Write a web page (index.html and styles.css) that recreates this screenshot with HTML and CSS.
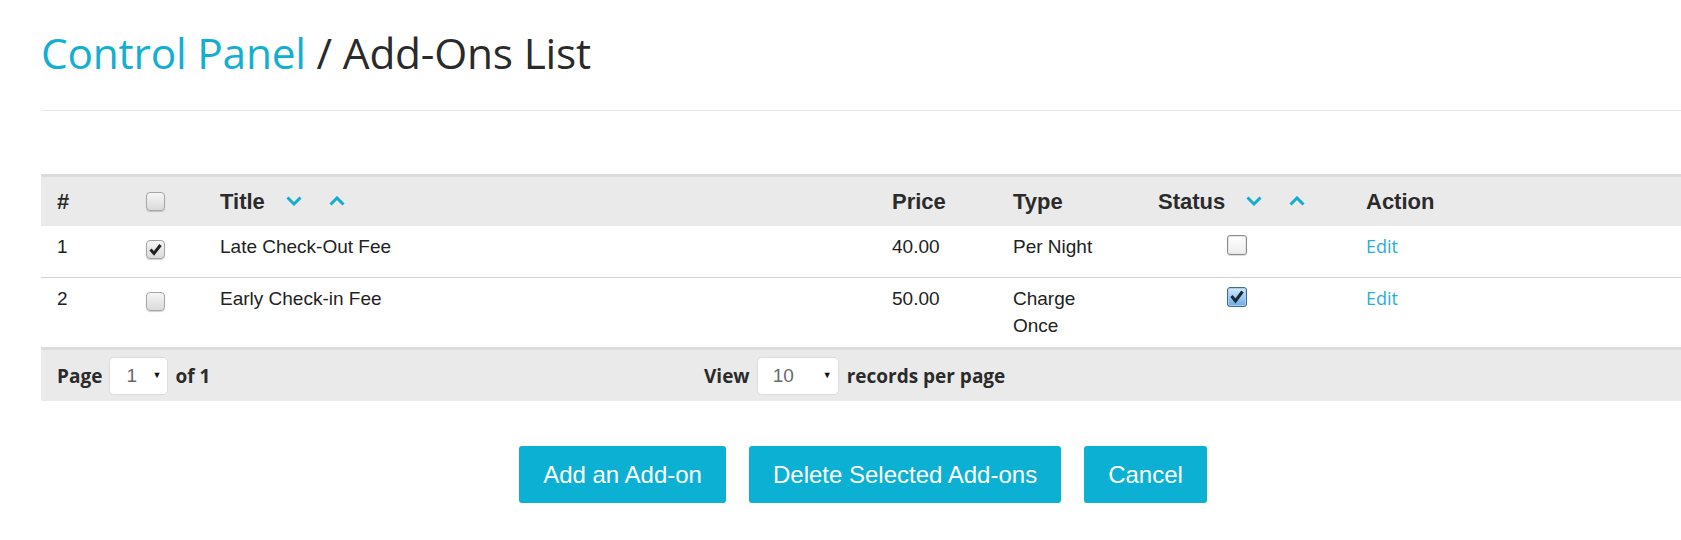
FILE: index.html
```html
<!DOCTYPE html>
<html>
<head>
<meta charset="utf-8">
<title>Add-Ons List</title>
<link rel="stylesheet" href="styles.css">
</head>
<body>
<div class="page">
  <h1 class="heading"><a class="crumb" href="#">Control Panel</a> / Add-Ons List</h1>
  <hr class="rule">

  <table class="grid">
    <colgroup>
      <col class="c-num"><col class="c-cb"><col class="c-title"><col class="c-price"><col class="c-type"><col class="c-status"><col class="c-action">
    </colgroup>
    <thead>
      <tr>
        <th>#</th>
        <th><span class="cb"></span></th>
        <th>Title <span class="sorts"><svg class="chev" viewBox="0 0 16 10"><polyline points="1.5,1.5 8,8 14.5,1.5"/></svg><svg class="chev" viewBox="0 0 16 10"><polyline points="1.5,8.5 8,2 14.5,8.5"/></svg></span></th>
        <th>Price</th>
        <th>Type</th>
        <th>Status <span class="sorts"><svg class="chev" viewBox="0 0 16 10"><polyline points="1.5,1.5 8,8 14.5,1.5"/></svg><svg class="chev" viewBox="0 0 16 10"><polyline points="1.5,8.5 8,2 14.5,8.5"/></svg></span></th>
        <th>Action</th>
      </tr>
    </thead>
    <tbody>
      <tr class="r1">
        <td>1</td>
        <td><span class="cb"><svg viewBox="0 0 19 19"><path d="M4.5 9.5 L8 13.5 L14.5 5" /></svg></span></td>
        <td>Late Check-Out Fee</td>
        <td>40.00</td>
        <td>Per Night</td>
        <td class="st"><span class="scb"></span></td>
        <td><a class="edit" href="#">Edit</a></td>
      </tr>
      <tr class="r2">
        <td>2</td>
        <td><span class="cb"></span></td>
        <td>Early Check-in Fee</td>
        <td>50.00</td>
        <td>Charge<br>Once</td>
        <td class="st"><span class="scb on"><svg viewBox="0 0 20 20"><path d="M4.5 9 L8.5 14 L15.5 4.5" /></svg></span></td>
        <td><a class="edit" href="#">Edit</a></td>
      </tr>
    </tbody>
  </table>

  <div class="pager">
    <div class="pg-left">
      <span>Page</span>
      <span class="sel sel-page">1<i class="arr">▼</i></span>
      <span>of 1</span>
    </div>
    <div class="pg-mid">
      <span>View</span>
      <span class="sel sel-view">10<i class="arr">▼</i></span>
      <span>records per page</span>
    </div>
  </div>

  <div class="actions">
    <a class="btn" href="#">Add an Add-on</a>
    <a class="btn" href="#">Delete Selected Add-ons</a>
    <a class="btn" href="#">Cancel</a>
  </div>
</div>
</body>
</html>
```

FILE: styles.css
```css
html, body {
  margin: 0;
  padding: 0;
  background: #fff;
  overflow: hidden;
}
body {
  font-family: "Liberation Sans", Arial, sans-serif;
  color: #222;
}
.page {
  width: 1644px;
  margin-left: 41px;
}
.heading {
  margin: 29px 0 0 0;
  font-family: "Open Sans", sans-serif;
  font-weight: 400;
  font-size: 42.4px;
  line-height: 47px;
  color: #2a2a2a;
  letter-spacing: -0.2px;
}
.crumb {
  color: #13afd2;
  text-decoration: none;
}
.rule {
  margin: 34px 0 0 0;
  border: 0;
  border-top: 1px solid #e8e8e8;
  height: 0;
}
.grid {
  margin-top: 63px;
  width: 1644px;
  table-layout: fixed;
  border-collapse: collapse;
  border-top: 3px solid #dcdcdc;
}
.c-num { width: 89px; }
.c-cb { width: 74px; }
.c-title { width: 672px; }
.c-price { width: 121px; }
.c-type { width: 145px; }
.c-status { width: 208px; }
.c-action { width: 335px; }
.grid th {
  background: #eaeaea;
  height: 49px;
  padding: 0 0 0 16px;
  text-align: left;
  font-size: 22px;
  font-weight: 700;
  color: #2b2b2b;
  vertical-align: middle;
  white-space: nowrap;
}
.grid th .cb { vertical-align: middle; margin-top: -3px; }
.sorts {
  display: inline-flex;
  gap: 27px;
  margin-left: 15px;
  vertical-align: middle;
  position: relative;
  top: -2px;
}
.chev {
  width: 16px;
  height: 10px;
  display: block;
}
.chev polyline {
  fill: none;
  stroke: #14acd0;
  stroke-width: 3;
}
.grid td {
  padding: 7px 0 0 16px;
  vertical-align: top;
  font-size: 19px;
  line-height: 27px;
  color: #222;
}
.grid tr.r1 td { height: 42px; border-bottom: 1px solid #cfcfcf; }
.grid tr.r2 td { height: 60px; }
.grid td.st {
  text-align: center;
  padding-left: 0;
  padding-right: 18px;
  padding-top: 9px;
  line-height: 0;
}
.cb {
  display: inline-block;
  box-sizing: border-box;
  width: 19px;
  height: 19px;
  border: 1px solid #a6a6a6;
  border-radius: 4px;
  background: linear-gradient(#f6f6f6, #dadada);
  box-shadow: 0 1px 1px rgba(0,0,0,0.18);
  vertical-align: top;
  margin-top: 7px;
  position: relative;
}
.cb svg, .scb svg {
  position: absolute;
  left: -1px;
  top: -1px;
  width: 19px;
  height: 19px;
}
.cb svg path {
  fill: none;
  stroke: #222;
  stroke-width: 3;
  stroke-linejoin: miter;
}
.scb {
  display: inline-block;
  box-sizing: border-box;
  width: 20px;
  height: 20px;
  border: 1px solid #8d8d8d;
  border-radius: 3px;
  background: linear-gradient(#ffffff, #ececec);
  box-shadow: inset 0 0 0 1px #e4e4e4, 0 1px 1px rgba(0,0,0,0.15);
  position: relative;
}
.scb.on {
  border-color: #3d6a9a;
  background: linear-gradient(#d7ebfb, #6aa9e4);
  box-shadow: inset 0 0 0 1px #a9cdef;
}
.scb.on svg { width: 20px; height: 20px; }
.scb.on svg path {
  fill: none;
  stroke: #1b2a3a;
  stroke-width: 3;
}
.edit {
  font-family: "Open Sans", sans-serif;
  font-size: 18px;
  color: #27afd5;
  text-decoration: none;
}
.pager {
  border-top: 3px solid #dcdcdc;
  background: #eaeaea;
  height: 51px;
  display: grid;
  grid-template-columns: 663px auto;
  align-items: center;
  font-family: "Open Sans", sans-serif;
  font-weight: 700;
  font-size: 19px;
  color: #2b2b2b;
}
.pg-left, .pg-mid {
  display: flex;
  align-items: center;
  gap: 7px;
}
.pg-left { padding-left: 16px; }
.sel {
  box-sizing: border-box;
  height: 38px;
  background: #fff;
  border: 1px solid #dcdcdc;
  border-radius: 5px;
  display: flex;
  align-items: center;
  font-family: "Liberation Sans", Arial, sans-serif;
  font-weight: 400;
  font-size: 19px;
  color: #6a6a6a;
  position: relative;
}
.sel-page { width: 59px; padding-left: 16px; }
.sel-view { width: 82px; padding-left: 15px; margin-right: 1px; }
.arr {
  position: absolute;
  right: 6px;
  top: 12px;
  font-style: normal;
  font-size: 9px;
  color: #111;
}
.actions {
  display: flex;
  justify-content: center;
  gap: 23px;
  margin-top: 45px;
}
.btn {
  display: block;
  height: 57px;
  line-height: 57px;
  padding: 0 24px;
  background: #0cb0d3;
  color: #fff;
  font-family: "Liberation Sans", Arial, sans-serif;
  font-size: 24px;
  text-decoration: none;
  border-radius: 3px;
}
```
